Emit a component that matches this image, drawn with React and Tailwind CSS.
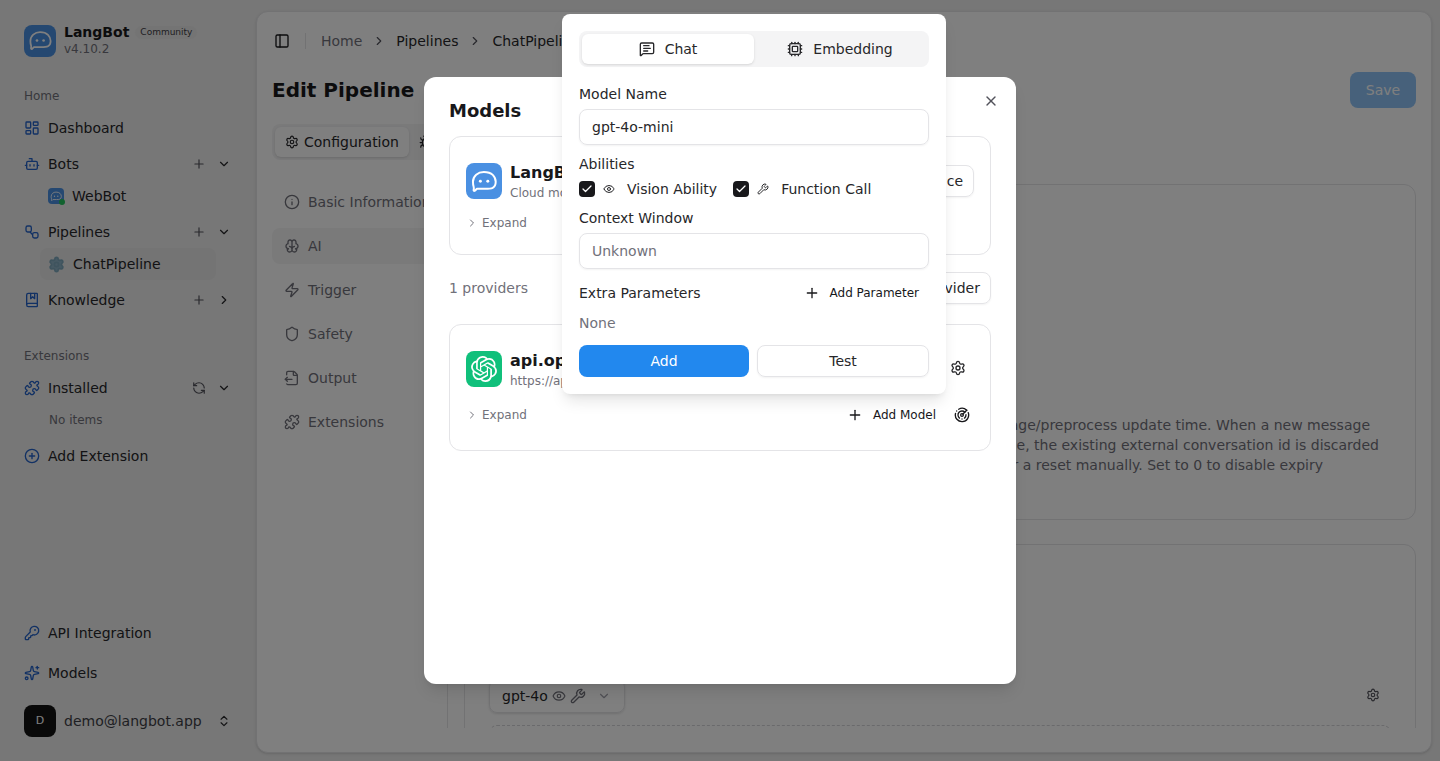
import { Bot, BookMarked, ChevronDown, ChevronRight, ChevronsUpDown, CirclePlus, Cpu, Eye, FileOutput, Bug, Info, KeyRound, LayoutDashboard, MessageSquareText, PanelLeft, Plus, Puzzle, Radar, RefreshCcw, Settings, Shield, Sparkles, Wrench, X, Zap, Check } from "lucide-react";
import { RiBrainLine } from "react-icons/ri";
import { SiOpenai } from "react-icons/si";

function Logo({ className }) {
  return (
    <div className={"flex items-center justify-center bg-[#4a90e2] " + className}>
      <svg viewBox="0 0 32 32" className="w-[88%] h-[88%]" fill="none" stroke="white" strokeWidth="2" strokeLinejoin="round">
        <path d="M5 17c0-6 5-10 11-10 4 0 7 1 9 3 2 2 3 4 3 7 0 3-1 5-3 6-2 1-5 1-8 1H9l-2 2c-1 .5-1.500 0-1.300-1 .3-1 .3-2 0-3C5 20 5 19 5 17z" />
        <circle cx="12.500" cy="16.500" r="1.500" fill="white" stroke="none" />
        <circle cx="20" cy="16.500" r="1.500" fill="white" stroke="none" />
      </svg>
    </div>
  );
}

function PipelinesIcon({ size, className }) {
  return (
    <svg width={size} height={size} viewBox="0 0 24 24" fill="none" stroke="currentColor" strokeWidth="2" className={className}>
      <rect x="3" y="3" width="8" height="9" rx="2.500" />
      <rect x="13" y="13" width="8" height="8" rx="2.500" />
      <path d="M9 12l4 4" />
    </svg>
  );
}

function NavRow({ icon: Icon, label, extra }) {
  return (
    <div className="flex items-center h-8 mt-1 pl-6 pr-[25px] text-[14px] text-[#27272a]">
      <Icon size={16} className="text-[#2563c9] mr-2 shrink-0" />
      <span className="flex-1">{label}</span>
      {extra}
    </div>
  );
}

function PlusChevron({ right }) {
  return (
    <div className="flex items-center gap-[11px] text-[#27272a]">
      <Plus size={14} className="text-[#52525b]" />
      {right ? <ChevronRight size={14} /> : <ChevronDown size={14} />}
    </div>
  );
}

function SideNav({ icon: Icon, label, active }) {
  return (
    <div className={"flex items-center gap-2 h-9 px-3 mb-2 rounded-lg whitespace-nowrap text-[14px] text-[#71717a] " + (active ? "bg-[#f4f4f5] text-[#18181b]" : "")}>
      <Icon size={16} className="shrink-0" />
      <span>{label}</span>
    </div>
  );
}

function Sidebar() {
  return (
    <div className="w-[256px] shrink-0 h-[761px] flex flex-col">
      <div className="flex items-center gap-2 pl-6 pt-6">
        <Logo className="w-8 h-8 rounded-lg" />
        <div>
          <div className="flex items-center gap-[6px]">
            <span className="text-[14px] font-bold leading-[17px] text-[#18181b]">LangBot</span>
            <span className="px-[5px] rounded-full bg-[#e9e9e9] text-[9px] leading-[13px] text-[#3f3f46]">Community</span>
          </div>
          <div className="text-[12px] leading-[16px] text-[#71717a]">v4.10.2</div>
        </div>
      </div>
      <div className="pl-6 mt-[30px] text-[12px] leading-[18px] text-[#71717a]">Home</div>
      <div className="h-[3px]"></div>
      <NavRow icon={LayoutDashboard} label="Dashboard" />
      <NavRow icon={Bot} label="Bots" extra={<PlusChevron />} />
      <div className="flex items-center h-8 pl-12 gap-2 text-[14px] text-[#27272a]">
        <div className="relative">
          <Logo className="w-4 h-4 rounded-[4px]" />
          <span className="absolute -right-[1px] -bottom-[1px] w-[6px] h-[6px] rounded-full bg-[#22c55e]"></span>
        </div>
        <span>WebBot</span>
      </div>
      <NavRow icon={PipelinesIcon} label="Pipelines" extra={<PlusChevron />} />
      <div className="flex items-center h-8 ml-10 w-[176px] pl-2 gap-2 rounded-lg bg-[#e8e8e8] text-[14px] text-[#27272a]">
        <Settings size={17} fill="#8fb4c8" stroke="#7fa8bd" strokeWidth={2.5} />
        <span>ChatPipeline</span>
      </div>
      <NavRow icon={BookMarked} label="Knowledge" extra={<PlusChevron right />} />
      <div className="pl-6 mt-[31px] text-[12px] leading-[18px] text-[#71717a]">Extensions</div>
      <div className="mt-[3px]">
        <NavRow icon={Puzzle} label="Installed" extra={
          <div className="flex items-center gap-[11px] text-[#27272a]">
            <RefreshCcw size={14} className="text-[#52525b]" />
            <ChevronDown size={14} />
          </div>
        } />
      </div>
      <div className="flex items-center h-8 pl-[49px] text-[12px] text-[#71717a]">No items</div>
      <NavRow icon={CirclePlus} label="Add Extension" />
      <div className="flex-1"></div>
      <div className="flex items-center h-8 pl-6 text-[14px] text-[#27272a]">
        <KeyRound size={16} className="text-[#2563c9] mr-2" />API Integration
      </div>
      <div className="flex items-center h-8 mt-2 pl-6 text-[14px] text-[#27272a]">
        <Sparkles size={16} className="text-[#2563c9] mr-2" />Models
      </div>
      <div className="flex items-center mt-4 mb-6 pl-6 pr-[25px]">
        <div className="w-8 h-8 rounded-lg bg-[#131313] text-white text-[11px] flex items-center justify-center">D</div>
        <span className="ml-2 flex-1 text-[14px] text-[#3f3f46]">demo@langbot.app</span>
        <ChevronsUpDown size={14} className="text-[#27272a]" />
      </div>
    </div>
  );
}

function Main() {
  return (
    <div className="flex-1 mt-[11px] mr-2 h-[742px] bg-white rounded-xl shadow-sm border border-[#e4e4e7] overflow-hidden flex flex-col">
      <div className="flex items-center h-[56px] mt-[1px] pl-[17px] text-[14px]">
        <PanelLeft size={16} className="text-[#18181b]" />
        <div className="w-px h-4 bg-[#e4e4e7] mx-[15px]"></div>
        <span className="text-[#71717a]">Home</span>
        <ChevronRight size={14} className="mx-[10px] text-[#52525b]" />
        <span className="text-[#27272a]">Pipelines</span>
        <ChevronRight size={14} className="mx-[10px] text-[#52525b]" />
        <span className="text-[#27272a]">ChatPipeline</span>
      </div>
      <div className="flex items-center justify-between pl-[15px] pr-[15px] mt-[3px]">
        <h1 className="text-[20px] font-bold text-[#18181b]">Edit Pipeline</h1>
        <button className="w-[66px] h-9 rounded-lg bg-[#2288ee] opacity-50 text-white text-[14px]">Save</button>
      </div>
      <div className="flex mt-[16px] ml-[15px] w-fit h-[36px] items-center rounded-lg bg-[#f4f4f5] py-[2px] pl-[3px] pr-4 text-[14px]">
        <div className="flex items-center gap-[5px] h-[30px] px-[10px] rounded-md bg-white shadow-sm text-[#27272a]">
          <Settings size={14} />Configuration
        </div>
        <div className="flex items-center gap-[5px] px-[10px] text-[#27272a]">
          <Bug size={14} />Debug Chat
        </div>
      </div>
      <div className="flex flex-1 mt-6 pl-[15px] min-h-0 h-[544px]">
        <div className="w-[176px] shrink-0 border-r border-[#e4e4e7] h-[544px] mr-4">
          <div className="pr-2">
            <SideNav icon={Info} label="Basic Information" />
            <SideNav icon={RiBrainLine} label="AI" active />
            <SideNav icon={Zap} label="Trigger" />
            <SideNav icon={Shield} label="Safety" />
            <SideNav icon={FileOutput} label="Output" />
            <SideNav icon={Puzzle} label="Extensions" />
          </div>
        </div>
        <div className="flex-1 pr-[15px] h-[544px] overflow-hidden flex flex-col gap-6">
          <div className="h-[336px] shrink-0 rounded-xl border border-[#e4e4e7] pt-[230px] flex flex-col items-end text-[14px] leading-[20px] text-[#71717a]">
            <div className="mr-[45px] whitespace-nowrap">Session expiry in minutes since the last message/preprocess update time. When a new message</div>
            <div className="mr-[36px] whitespace-nowrap">arrives after this time, the existing external conversation id is discarded</div>
            <div className="mr-[92px] whitespace-nowrap">and a new one is created, the same as after a reset manually. Set to 0 to disable expiry</div>
          </div>
          <div className="h-[260px] shrink-0 rounded-xl border border-[#e4e4e7] pt-[134px] px-6">
            <div className="flex items-center justify-between">
              <div className="flex items-center gap-1 h-[34px] w-[136px] px-3 rounded-lg border border-[#e4e4e7] shadow-sm text-[14px] text-[#27272a]">
                gpt-4o
                <Eye size={14} className="text-[#71717a]" />
                <Wrench size={16} className="text-[#71717a]" />
                <ChevronDown size={14} className="text-[#a1a1aa] ml-[7px]" />
              </div>
              <Settings size={14} className="text-[#52525b] mr-[11px] -mt-[2px]" />
            </div>
            <div className="h-10 mt-3 rounded-lg border border-dashed border-[#d4d4d8]"></div>
          </div>
        </div>
      </div>
    </div>
  );
}

function ExpandRow() {
  return (
    <div className="flex items-center gap-1 text-[12px] leading-[18px] text-[#71717a]">
      <ChevronRight size={12} />
      <span>Expand</span>
    </div>
  );
}

function ProviderText({ title, sub }) {
  return (
    <div className="pt-[2px] translate-y-px">
      <div className="text-[16px] font-semibold leading-[20px] text-[#18181b]">{title}</div>
      <div className="text-[12px] leading-[20px] text-[#71717a]">{sub}</div>
    </div>
  );
}

function ModelsDialog() {
  return (
    <div className="absolute left-[424px] top-[77px] w-[592px] h-[607px] bg-white rounded-xl shadow-lg px-[25px]">
      <div className="flex items-center justify-between h-[59px] pt-[8px]">
        <h2 className="text-[18px] font-semibold text-[#18181b]">Models</h2>
        <X size={16} className="text-[#52525b] -mr-[8px] -mt-[19px]" />
      </div>
      <div className="h-[119px] rounded-xl border border-[#e4e4e7] px-4 pt-[23px]">
        <div className="flex items-center justify-between">
          <div className="flex items-center gap-2">
            <Logo className="w-9 h-9 rounded-lg" />
            <ProviderText title="LangBot Models" sub="Cloud models" />
          </div>
          <button className="h-8 px-[10px] rounded-lg border border-[#e4e4e7] shadow-xs text-[14px] text-[#27272a]">Marketplace</button>
        </div>
        <div className="mt-[12px]"><ExpandRow /></div>
      </div>
      <div className="flex items-center justify-between mt-[17px] h-8">
        <span className="text-[14px] text-[#71717a]">1 providers</span>
        <button className="h-8 px-[10px] rounded-lg border border-[#e4e4e7] shadow-xs text-[14px] text-[#27272a]">Add Provider</button>
      </div>
      <div className="h-[127px] mt-[20px] rounded-xl border border-[#e4e4e7] px-4 pt-[23px]">
        <div className="flex items-center justify-between">
          <div className="flex items-center gap-2">
            <div className="w-9 h-9 rounded-lg bg-[#10c07b] flex items-center justify-center">
              <SiOpenai size={26} className="text-white" />
            </div>
            <ProviderText title="api.openai.com" sub="https://api.openai.com/v1" />
          </div>
          <Settings size={16} className="text-[#27272a] mr-2 -mt-[2px]" />
        </div>
        <div className="flex items-center justify-between mt-[16px]">
          <ExpandRow />
          <div className="flex items-center text-[12px] text-[#18181b]">
            <Plus size={16} className="mr-[10px]" />
            Add Model
            <Radar size={16} className="ml-[18px] mr-1" />
          </div>
        </div>
      </div>
    </div>
  );
}

function AddModelPopover() {
  return (
    <div className="absolute left-[562px] top-[14px] w-[384px] h-[380px] bg-white rounded-lg shadow-lg px-[17px] pt-[17px] text-[14px] text-[#27272a]">
      <div className="flex h-9 p-[3px] rounded-lg bg-[#f4f4f5]">
        <div className="w-[172px] flex items-center justify-center gap-[10px] rounded-md bg-white shadow-sm">
          <MessageSquareText size={16} />Chat
        </div>
        <div className="flex-1 flex items-center justify-center gap-[10px]">
          <Cpu size={16} />Embedding
        </div>
      </div>
      <div className="mt-[19px] leading-[17px]">Model Name</div>
      <div className="mt-[6px] h-9 flex items-center px-3 rounded-lg border border-[#e4e4e7] shadow-xs">gpt-4o-mini</div>
      <div className="mt-[11px] leading-[17px]">Abilities</div>
      <div className="flex items-center h-4 mt-[8px]">
        <span className="w-4 h-4 rounded-[4px] bg-[#18181b] flex items-center justify-center"><Check size={12} strokeWidth={2.5} className="text-white" /></span>
        <Eye size={12} className="ml-2" />
        <span className="ml-3">Vision Ability</span>
        <span className="ml-4 w-4 h-4 rounded-[4px] bg-[#18181b] flex items-center justify-center"><Check size={12} strokeWidth={2.5} className="text-white" /></span>
        <Wrench size={12} className="ml-2" />
        <span className="ml-3">Function Call</span>
      </div>
      <div className="mt-[13px] leading-[17px]">Context Window</div>
      <div className="mt-[6px] h-9 flex items-center px-3 rounded-lg border border-[#e4e4e7] shadow-xs text-[#71717a]">Unknown</div>
      <div className="flex items-center justify-between mt-[16px] h-[17px]">
        <span>Extra Parameters</span>
        <div className="flex items-center text-[12px] leading-[14px] text-[#18181b] pr-[10px] pb-[1px]">
          <Plus size={16} className="mr-[10px]" />Add Parameter
        </div>
      </div>
      <div className="mt-[13px] leading-[17px] text-[#71717a]">None</div>
      <div className="flex gap-2 mt-[13px]">
        <button className="w-[170px] h-8 rounded-lg bg-[#2288ee] text-white">Add</button>
        <button className="flex-1 h-8 rounded-lg border border-[#e4e4e7] shadow-xs">Test</button>
      </div>
    </div>
  );
}

export default function App() {
  return (
    <div className="relative h-[761px] overflow-hidden bg-[#eeeeee] flex font-['DejaVu_Sans',sans-serif]">
      <Sidebar />
      <Main />
      <div className="absolute inset-0 bg-black/50"></div>
      <ModelsDialog />
      <AddModelPopover />
    </div>
  );
}
